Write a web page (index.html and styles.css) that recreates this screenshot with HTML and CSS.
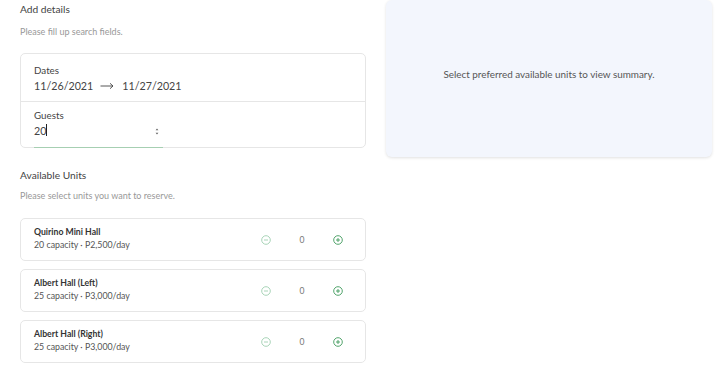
FILE: index.html
```html
<!DOCTYPE html>
<html lang="en">
<head>
    <meta charset="UTF-8">
    <meta name="viewport" content="width=device-width, initial-scale=1.0">
    <title>Reserve Units</title>
    <link rel="stylesheet" href="styles.css">
</head>
<body>

    <div class="page">
        <!-- Left column: search fields + unit list -->
        <div class="left-col">
            <h2 class="section-title">Add details</h2>
            <p class="section-hint">Please fill up search fields.</p>

            <div class="search-card">
                <div class="field">
                    <div class="field-label">Dates</div>
                    <div class="field-value">11/26/2021<svg class="arrow" width="14" height="8" viewBox="0 0 14 8"><path d="M0.5 4 H13 M10 1.3 L13 4 L10 6.7" fill="none" stroke="#444" stroke-width="0.9"/></svg>11/27/2021</div>
                </div>
                <div class="field field-guests">
                    <div class="field-label">Guests</div>
                    <div class="guests-input">
                        <span class="field-value">20<span class="caret"></span></span>
                        <span class="spinner">
                            <svg width="4" height="9" viewBox="0 0 4 9"><path d="M0.6 3.2 L2 1.6 L3.4 3.2 Z M0.6 5.8 L2 7.4 L3.4 5.8 Z" fill="#666"/></svg>
                        </span>
                    </div>
                </div>
            </div>

            <h2 class="section-title units-title">Available Units</h2>
            <p class="section-hint">Please select units you want to reserve.</p>

            <div class="unit-list">
                <div class="unit-card">
                    <div class="unit-info">
                        <div class="unit-name">Quirino Mini Hall</div>
                        <div class="unit-meta">20 capacity · P2,500/day</div>
                    </div>
                    <div class="counter">
                        <svg class="icon icon-minus" width="10" height="10" viewBox="0 0 10 10"><circle cx="5" cy="5" r="4.3" fill="none" stroke="currentColor" stroke-width="0.9"/><path d="M3 5 H7" stroke="currentColor" stroke-width="0.9"/></svg>
                        <span class="count">0</span>
                        <svg class="icon icon-plus" width="10" height="10" viewBox="0 0 10 10"><circle cx="5" cy="5" r="4.3" fill="none" stroke="currentColor" stroke-width="0.9"/><path d="M3 5 H7 M5 3 V7" stroke="currentColor" stroke-width="0.9"/></svg>
                    </div>
                </div>
                <div class="unit-card">
                    <div class="unit-info">
                        <div class="unit-name">Albert Hall (Left)</div>
                        <div class="unit-meta">25 capacity · P3,000/day</div>
                    </div>
                    <div class="counter">
                        <svg class="icon icon-minus" width="10" height="10" viewBox="0 0 10 10"><circle cx="5" cy="5" r="4.3" fill="none" stroke="currentColor" stroke-width="0.9"/><path d="M3 5 H7" stroke="currentColor" stroke-width="0.9"/></svg>
                        <span class="count">0</span>
                        <svg class="icon icon-plus" width="10" height="10" viewBox="0 0 10 10"><circle cx="5" cy="5" r="4.3" fill="none" stroke="currentColor" stroke-width="0.9"/><path d="M3 5 H7 M5 3 V7" stroke="currentColor" stroke-width="0.9"/></svg>
                    </div>
                </div>
                <div class="unit-card">
                    <div class="unit-info">
                        <div class="unit-name">Albert Hall (Right)</div>
                        <div class="unit-meta">25 capacity · P3,000/day</div>
                    </div>
                    <div class="counter">
                        <svg class="icon icon-minus" width="10" height="10" viewBox="0 0 10 10"><circle cx="5" cy="5" r="4.3" fill="none" stroke="currentColor" stroke-width="0.9"/><path d="M3 5 H7" stroke="currentColor" stroke-width="0.9"/></svg>
                        <span class="count">0</span>
                        <svg class="icon icon-plus" width="10" height="10" viewBox="0 0 10 10"><circle cx="5" cy="5" r="4.3" fill="none" stroke="currentColor" stroke-width="0.9"/><path d="M3 5 H7 M5 3 V7" stroke="currentColor" stroke-width="0.9"/></svg>
                    </div>
                </div>
            </div>
        </div>

        <!-- Right column: summary -->
        <div class="right-col">
            <div class="summary-card">
                Select preferred available units to view summary.
            </div>
        </div>
    </div>

</body>
</html>
```

FILE: styles.css
```css
body {
    font-family: Lato, "Noto Sans", sans-serif;
    margin: 0;
    padding: 0;
    background-color: #ffffff;
    color: #333;
}

.page {
    display: flex;
    gap: 20px;
    padding: 0 4px 0 20px;
}

.left-col {
    width: 346px;
    flex-shrink: 0;
}

.right-col {
    flex: 1;
}

.section-title {
    margin: 0;
    padding-top: 3px;
    font-size: 10.2px;
    font-weight: normal;
    color: #444;
    line-height: 12px;
}

.section-hint {
    margin: 11px 0 0;
    font-size: 9px;
    color: #999;
    line-height: 12px;
}

.units-title {
    padding-top: 0;
    margin-top: 21px;
}

.units-title + .section-hint {
    margin-top: 9px;
}

/* Search card */
.search-card {
    margin-top: 15px;
    border: 1px solid #e6e6e6;
    border-radius: 5px;
}

.field {
    padding: 10px 13px 6px;
}

.field-guests {
    border-top: 1px solid #e6e6e6;
    padding-top: 7px;
    padding-bottom: 0;
}

.field-label {
    font-size: 9.8px;
    color: #444;
    line-height: 13px;
}

.field-value {
    font-size: 10.7px;
    color: #444;
    line-height: 18px;
}

.arrow {
    margin: 0 8px 0 7px;
    vertical-align: 0;
}

.guests-input {
    width: 129px;
    display: flex;
    justify-content: space-between;
    align-items: center;
    padding-bottom: 7px;
    border-bottom: 1.5px solid #a6cfb2;
    margin-bottom: -1px;
}

.caret {
    display: inline-block;
    width: 1px;
    height: 12px;
    background: #222;
    vertical-align: -1px;
}

.spinner {
    display: flex;
    margin-right: 4px;
}

/* Unit list */
.unit-list {
    margin-top: 16px;
    display: flex;
    flex-direction: column;
    gap: 8px;
}

.unit-card {
    display: flex;
    align-items: center;
    justify-content: space-between;
    height: 41px;
    padding: 0 13px;
    border: 1px solid #e6e6e6;
    border-radius: 5px;
}

.unit-info {
    margin-top: -3px;
}

.unit-name {
    font-size: 8.7px;
    font-weight: bold;
    color: #333;
    line-height: 12px;
}

.unit-meta {
    font-size: 8.8px;
    color: #555;
    line-height: 13px;
}

.counter {
    display: flex;
    align-items: center;
    margin-right: 9px;
}

.icon-minus {
    color: #9fcfb0;
}

.icon-plus {
    color: #3f9a5c;
}

.count {
    width: 62px;
    text-align: center;
    font-size: 8.5px;
    color: #777;
}

/* Summary panel */
.summary-card {
    height: 157px;
    background-color: #f3f6fd;
    border-radius: 6px;
    box-shadow: 0 1px 3px rgba(0, 0, 0, 0.12);
    display: flex;
    align-items: center;
    justify-content: center;
    padding-bottom: 10px;
    box-sizing: border-box;
    font-size: 9.9px;
    color: #555;
}
```
